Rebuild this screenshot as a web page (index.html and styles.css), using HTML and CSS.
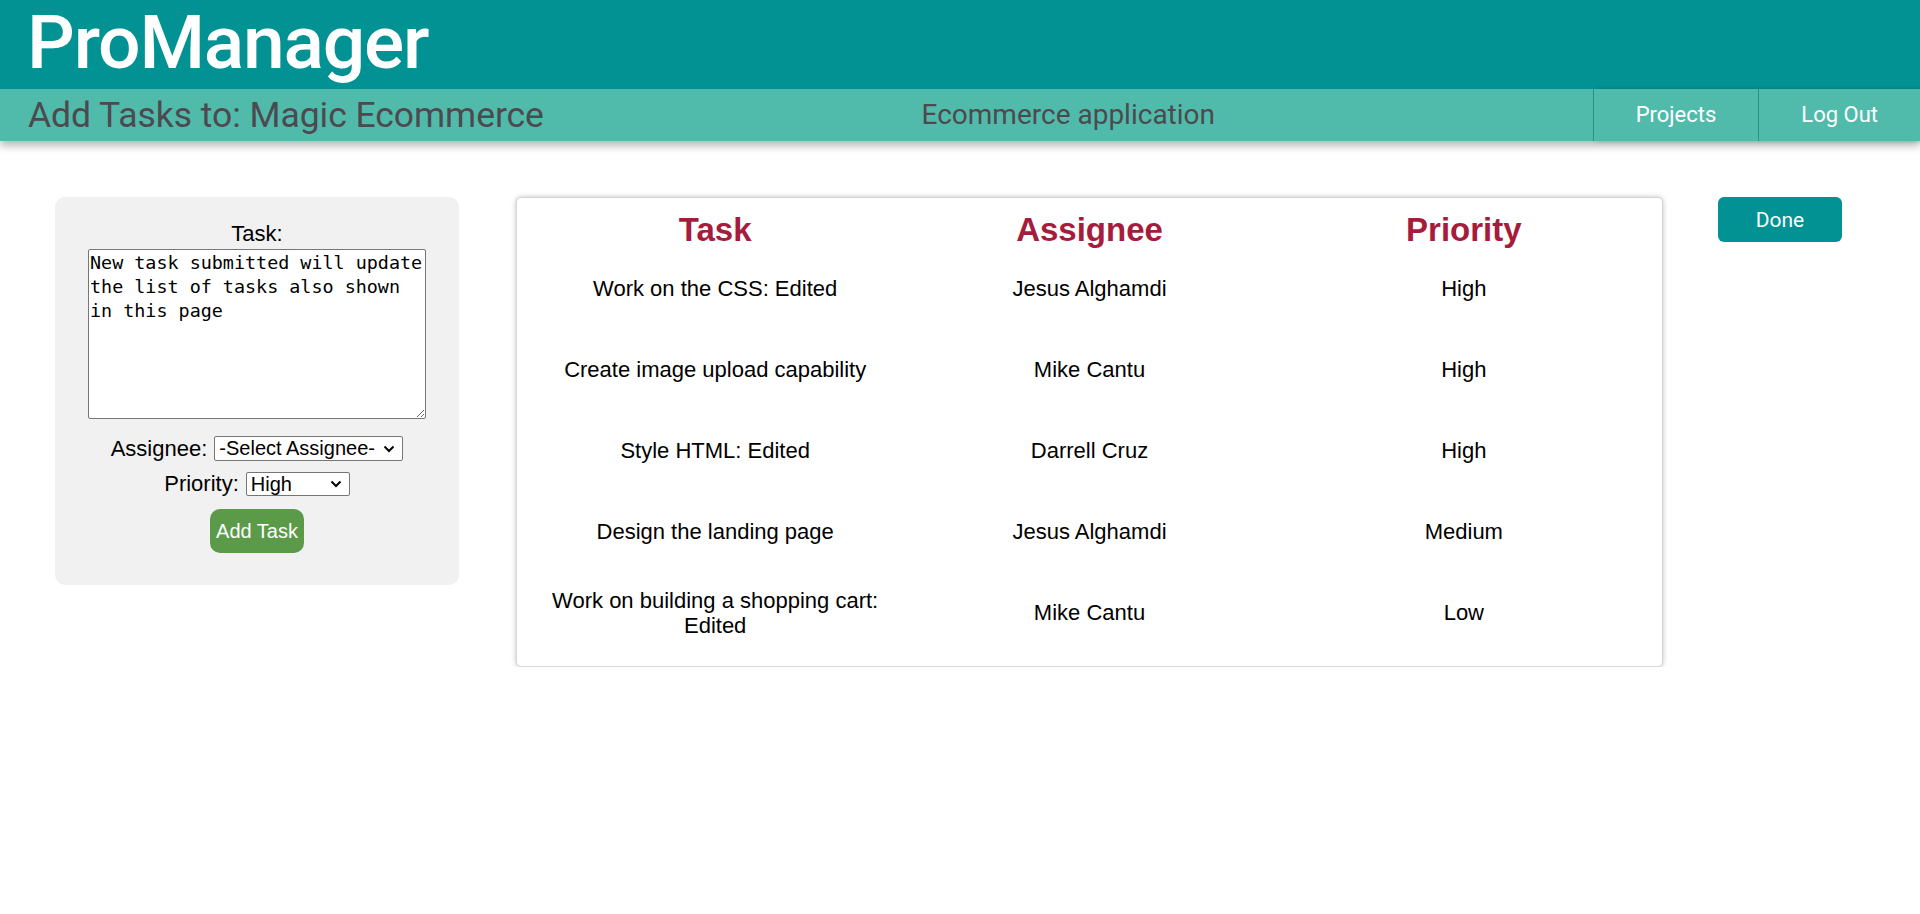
FILE: index.html
```html
<!DOCTYPE html>
<html lang="en">
<head>
<meta charset="utf-8">
<title>ProManager - Add Tasks</title>
<link rel="stylesheet" href="styles.css">
</head>
<body>
<header class="site-header">
  <div class="brand-bar">
    <h1 class="brand">ProManager</h1>
  </div>
  <div class="sub-bar">
    <h2 class="page-title">Add Tasks to: Magic Ecommerce</h2>
    <p class="project-desc">Ecommerce application</p>
    <nav class="nav">
      <a class="nav-item" href="#">Projects</a>
      <a class="nav-item" href="#">Log Out</a>
    </nav>
  </div>
</header>

<main class="main">
  <form class="task-form">
    <label class="form-label" for="task">Task:</label>
    <textarea id="task" class="task-input">New task submitted will update the list of tasks also shown in this page</textarea>
    <div class="form-row row-assignee">
      <label class="form-label" for="assignee">Assignee:</label>
      <span class="select-wrap">
        <select id="assignee" class="select select-assignee">
          <option>-Select Assignee-</option>
          <option>Jesus Alghamdi</option>
          <option>Mike Cantu</option>
          <option>Darrell Cruz</option>
        </select>
        <svg class="chevron" width="12" height="8" viewBox="0 0 12 8" aria-hidden="true"><path d="M1.5 1.5 L6 6 L10.5 1.5" fill="none" stroke="#000" stroke-width="2"/></svg>
      </span>
    </div>
    <div class="form-row row-priority">
      <label class="form-label" for="priority">Priority:</label>
      <span class="select-wrap">
        <select id="priority" class="select select-priority">
          <option>High</option>
          <option>Medium</option>
          <option>Low</option>
        </select>
        <svg class="chevron" width="12" height="8" viewBox="0 0 12 8" aria-hidden="true"><path d="M1.5 1.5 L6 6 L10.5 1.5" fill="none" stroke="#000" stroke-width="2"/></svg>
      </span>
    </div>
    <button type="button" class="btn-add">Add Task</button>
  </form>

  <section class="task-card">
    <table class="task-table">
      <thead>
        <tr><th>Task</th><th>Assignee</th><th>Priority</th></tr>
      </thead>
      <tbody>
        <tr><td>Work on the CSS: Edited</td><td>Jesus Alghamdi</td><td>High</td></tr>
        <tr><td>Create image upload capability</td><td>Mike Cantu</td><td>High</td></tr>
        <tr><td>Style HTML: Edited</td><td>Darrell Cruz</td><td>High</td></tr>
        <tr><td>Design the landing page</td><td>Jesus Alghamdi</td><td>Medium</td></tr>
        <tr><td>Work on building a shopping cart: Edited</td><td>Mike Cantu</td><td>Low</td></tr>
      </tbody>
    </table>
  </section>

  <button type="button" class="btn-done">Done</button>
</main>
</body>
</html>
```

FILE: styles.css
```css
* { box-sizing: border-box; }

html, body {
  margin: 0;
  padding: 0;
  background: #ffffff;
}

body {
  font-family: "Liberation Sans", Arial, sans-serif;
  color: #000;
}

/* ---------- header ---------- */
.site-header {
  position: relative;
  z-index: 2;
  box-shadow: 0 5px 8px rgba(0, 0, 0, 0.28);
}

.brand-bar {
  background: #039294;
  height: 89px;
  padding: 0 0 0 27px;
}

.brand {
  margin: 0;
  font-family: Roboto, "Noto Sans", sans-serif;
  font-weight: 500;
  font-size: 75px;
  line-height: 85px;
  color: #ffffff;
  letter-spacing: -1.2px;
}

.sub-bar {
  background: #51bbab;
  height: 52px;
  display: flex;
  align-items: center;
  justify-content: space-between;
  padding-left: 28px;
}

.page-title {
  margin: 0;
  font-family: Roboto, "Noto Sans", sans-serif;
  font-weight: 400;
  font-size: 35.5px;
  line-height: 52px;
  letter-spacing: -0.05px;
  color: #4d4a4f;
}

.project-desc {
  margin: 0;
  font-family: Roboto, "Noto Sans", sans-serif;
  font-size: 28px;
  line-height: 52px;
  color: #4d4a4f;
}

.nav {
  display: flex;
  height: 52px;
  align-self: stretch;
}

.nav-item {
  display: block;
  padding: 0 42px;
  line-height: 51px;
  font-family: Roboto, "Noto Sans", sans-serif;
  font-size: 22px;
  color: #ffffff;
  text-decoration: none;
  border-left: 1px solid #2e8f88;
  box-shadow: 3px 0 4px rgba(0, 0, 0, 0.22);
  background: #51bbab;
  position: relative;
}

/* ---------- main ---------- */
.main {
  display: flex;
  align-items: flex-start;
  padding: 56px 0 0 55px;
}

.task-form {
  width: 404px;
  flex: none;
  background: #f1f1f1;
  border-radius: 10px;
  padding: 24px 0 32px;
  display: flex;
  flex-direction: column;
  align-items: center;
}

.form-label {
  font-size: 22px;
  line-height: 25px;
}

.task-input {
  display: block;
  margin-top: 3px;
  width: 338px;
  height: 170px;
  padding: 1px;
  border: 1px solid #767676;
  border-radius: 2px;
  font-family: "DejaVu Sans Mono", "Liberation Mono", monospace;
  font-size: 18.4px;
  line-height: 24px;
  color: #000;
  background: #fff;
  resize: both;
}

.form-row {
  display: flex;
  align-items: center;
  justify-content: center;
  gap: 7px;
}

.row-assignee { margin-top: 17px; }
.row-priority { margin-top: 10px; }

.select-wrap {
  position: relative;
  display: inline-block;
  line-height: 0;
}

.select {
  -webkit-appearance: none;
  appearance: none;
  font-family: "Liberation Sans", Arial, sans-serif;
  font-size: 20px;
  line-height: 23px;
  height: 25px;
  padding: 0 24px 0 4px;
  border: 1px solid #767676;
  border-radius: 2px;
  background: #fff;
  color: #000;
}

.chevron {
  position: absolute;
  right: 8px;
  top: 50%;
  margin-top: -4px;
  pointer-events: none;
}

.select-assignee { width: 189px; }
.select-priority { width: 104px; height: 24px; }

.btn-add {
  margin-top: 13px;
  height: 44px;
  padding: 0 6px;
  border: none;
  border-radius: 10px;
  background: #5a9a48;
  color: #ffffff;
  font-family: "Liberation Sans", Arial, sans-serif;
  font-size: 20px;
}

/* ---------- task table ---------- */
.task-card {
  flex: none;
  margin-left: 57px;
  width: 1147px;
  padding: 13px 11px 13px 11px;
  border: 1px solid #d6d6d6;
  border-radius: 5px;
  background: #fff;
  box-shadow: 0 0 5px rgba(0, 0, 0, 0.25);
}

.task-table {
  width: 100%;
  table-layout: fixed;
  border-collapse: collapse;
}

.task-table th {
  height: 37px;
  padding: 0;
  font-size: 33px;
  line-height: 37px;
  font-weight: 700;
  color: #a51c3c;
  text-align: center;
}

.task-table td {
  height: 81px;
  padding: 0 4px;
  font-size: 22px;
  line-height: 25px;
  text-align: center;
  vertical-align: middle;
}

/* ---------- done ---------- */
.btn-done {
  flex: none;
  margin-left: 55px;
  width: 124px;
  height: 45px;
  border: none;
  border-radius: 6px;
  background: #039294;
  color: #ffffff;
  font-family: Roboto, "Noto Sans", sans-serif;
  font-size: 21px;
}
```
